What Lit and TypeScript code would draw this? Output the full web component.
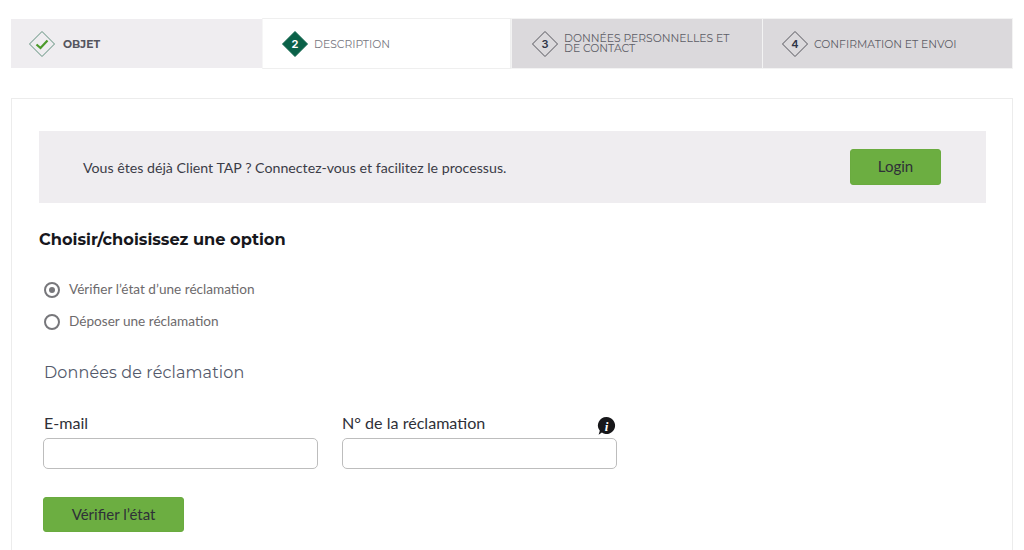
import { LitElement, html, css, svg } from "lit";
import { customElement } from "lit/decorators.js";

const diamond = (label: string, state: "done" | "active" | "todo") => html`
  <svg class="diamond" width="28" height="28" viewBox="0 0 28 28">
    <path
      d="M14 1.5 26.5 14 14 26.5 1.5 14Z"
      fill=${state === "active" ? "#0a6148" : "none"}
      stroke=${state === "done" ? "#5f8f7c" : state === "active" ? "#0a6148" : "#55555c"}
      stroke-width="1"
    />
    ${state === "done"
      ? svg`<path d="M8.500 14.500 12.500 18 19.500 10.500" fill="none" stroke="#4c9a2a" stroke-width="2.2" />`
      : svg`<text x="14" y="18" text-anchor="middle" font-size="11" font-weight=${state === "active" ? "700" : "600"}
          font-family="Inter, sans-serif" fill=${state === "active" ? "#fff" : "#2e3547"}>${label}</text>`}
  </svg>
`;

@customElement("app-root")
export class AppRoot extends LitElement {
  static styles = css`
    :host {
      display: block;
      height: 550px;
      overflow: hidden;
      background: #fff;
      font-family: Lato, sans-serif;
      color: #2f3038;
    }

    .page {
      padding: 18px 11px 0;
    }

    .steps {
      display: grid;
      grid-template-columns: 251px 249px 251px 251px;
      height: 51px;
    }

    .step {
      display: flex;
      align-items: center;
      box-sizing: border-box;
      padding-top: 1px;
      font-family: Montserrat, Inter, sans-serif;
      font-size: 10.8px;
      line-height: 10.5px;
      color: #5d5d66;
      background: #dbd9dc;
    }

    .step .one {
      margin-top: 2px;
    }

    .step.done {
      gap: 7px;
      padding-left: 17px;
      border: solid #fff;
      border-width: 1px 0;
      background: #efedf0;
      font-weight: 700;
      color: #55555e;
    }

    .step.active {
      gap: 5px;
      padding-left: 18px;
      border: 1px solid #efefef;
      border-left-color: #f6f6f6;
      background: #fff;
      color: #77777f;
    }

    .step.todo {
      gap: 5px;
      padding-left: 19px;
      border: 1px solid #f3f3f3;
      border-right: 0;
    }

    .step.todo.last {
      padding-left: 18px;
      border-right: 1px solid #f3f3f3;
    }

    .card {
      margin-top: 29px;
      height: 480px;
      border: 1px solid #ececec;
      padding: 32px 26px 0 27px;
    }

    .banner {
      display: flex;
      align-items: center;
      justify-content: space-between;
      height: 72px;
      padding: 0 45px 0 44px;
      background: #efedf0;
      font-size: 14.2px;
      color: #3b3c47;
    }

    button {
      border: 1px solid #6aab3f;
      border-radius: 3px;
      background: #6cae41;
      font-family: inherit;
      font-size: 15px;
      color: #2f3038;
      padding: 0 0 2px;
    }

    .login {
      width: 91px;
      height: 36px;
    }

    h2 {
      margin: 27px 0 0;
      font-family: Montserrat, Inter, sans-serif;
      font-size: 16.2px;
      line-height: 18px;
      font-weight: 700;
      color: #17171c;
    }

    .options {
      display: flex;
      flex-direction: column;
      gap: 12px;
      margin: 31px 0 0 4px;
    }

    .option {
      display: flex;
      align-items: center;
      gap: 9px;
      height: 20px;
      font-size: 13.6px;
      color: #6d6a6c;
    }

    .radio {
      width: 16px;
      height: 16px;
      margin: 2px 0 0 1px;
      border: 2px solid #77777b;
      border-radius: 50%;
      box-sizing: border-box;
      display: flex;
      align-items: center;
      justify-content: center;
    }

    .radio.checked::after {
      content: "";
      width: 6px;
      height: 6px;
      border-radius: 50%;
      background: #77777b;
    }

    .section {
      margin: 32px 0 0 5px;
    }

    h3 {
      margin: 0;
      font-family: Montserrat, Inter, sans-serif;
      font-size: 16px;
      line-height: 20px;
      font-weight: 400;
      letter-spacing: 0.13px;
      color: #545a6b;
    }

    .fields {
      display: flex;
      gap: 24px;
      margin: 30px 0 0 -1px;
    }

    .field {
      position: relative;
      display: flex;
      flex-direction: column;
      width: 275px;
    }

    label {
      font-size: 16.1px;
      line-height: 20px;
      color: #2f3038;
      margin-left: 1px;
      margin-bottom: 5px;
    }

    .field + .field label {
      margin-left: 0;
    }

    input {
      display: block;
      box-sizing: border-box;
      width: 100%;
      height: 31px;
      border: 1px solid #bdbdbd;
      border-radius: 5px;
      background: #fff;
      padding: 0 8px;
    }

    .info {
      position: absolute;
      top: 3px;
      right: 1px;
    }

    .check {
      display: block;
      width: 141px;
      height: 35px;
      margin: 28px 0 0 -1px;
    }
  `;

  render() {
    return html`
      <div class="page">
        <div class="steps">
          <div class="step done">${diamond("1", "done")}<span class="one">OBJET</span></div>
          <div class="step active">${diamond("2", "active")}<span class="one">DESCRIPTION</span></div>
          <div class="step todo">
            ${diamond("3", "todo")}<span>DONNÉES PERSONNELLES ET<br />DE CONTACT</span>
          </div>
          <div class="step todo last">${diamond("4", "todo")}<span class="one">CONFIRMATION ET ENVOI</span></div>
        </div>

        <div class="card">
          <div class="banner">
            <span>Vous êtes déjà Client TAP ? Connectez-vous et facilitez le processus.</span>
            <button class="login">Login</button>
          </div>

          <h2>Choisir/choisissez une option</h2>

          <div class="options">
            <div class="option"><span class="radio checked"></span>Vérifier l’état d’une réclamation</div>
            <div class="option"><span class="radio"></span>Déposer une réclamation</div>
          </div>

          <div class="section">
            <h3>Données de réclamation</h3>
            <div class="fields">
              <div class="field">
                <label>E-mail</label>
                <input type="text" />
              </div>
              <div class="field">
                <label>N° de la réclamation</label>
                <input type="text" />
                <svg class="info" width="19" height="20" viewBox="0 0 19 20">
                  <path d="M9.500 1a8.500 8.500 0 1 1-4.600 15.600L1.600 18.800l1.200-4A8.500 8.500 0 0 1 9.500 1Z" fill="#17171a" />
                  <text x="9.500" y="14.500" text-anchor="middle" font-size="13" font-weight="700"
                    font-style="italic" font-family="Liberation Serif, serif" fill="#fff">i</text>
                </svg>
              </div>
            </div>
            <button class="check">Vérifier l’état</button>
          </div>
        </div>
      </div>
    `;
  }
}

declare global {
  interface HTMLElementTagNameMap {
    "app-root": AppRoot;
  }
}
